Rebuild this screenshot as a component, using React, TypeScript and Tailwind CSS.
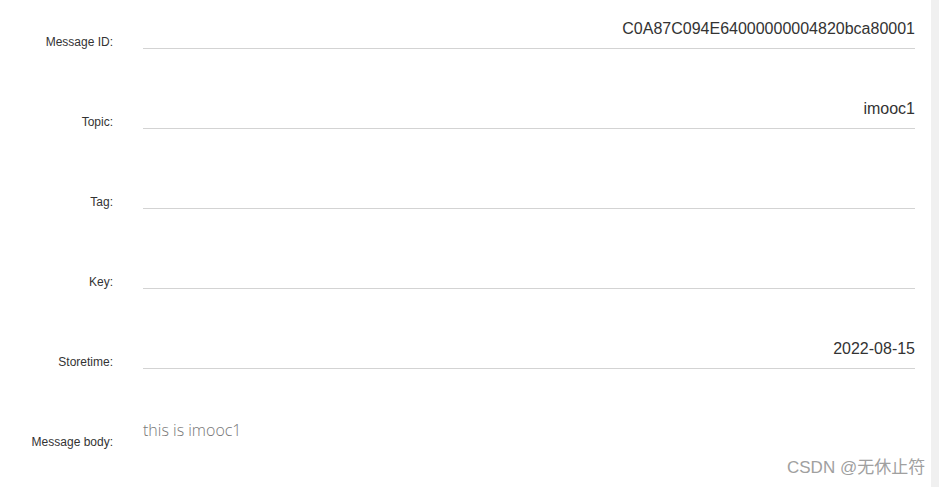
const rows: { label: string; value: string }[] = [
  { label: 'Message ID:', value: 'C0A87C094E64000000004820bca80001' },
  { label: 'Topic:', value: 'imooc1' },
  { label: 'Tag:', value: '' },
  { label: 'Key:', value: '' },
  { label: 'Storetime:', value: '2022-08-15' },
];

function Row({ label, value }: { label: string; value: string }) {
  return (
    <div className="flex h-[80px]">
      <div className="w-[113px] shrink-0 pt-[35px] text-right text-[12px] leading-[14px] text-[#333]">
        {label}
      </div>
      <div className="ml-[30px] h-[49px] w-[772px] border-b border-[#d3d3d3] pt-[20px] text-right text-[16px] leading-[18px] text-[#333]">
        {value}
      </div>
    </div>
  );
}

export default function App() {
  return (
    <div className="relative flex h-[487px] w-[939px] overflow-hidden bg-white font-['Liberation_Sans',Arial,sans-serif]">
      <div className="w-[931px]">
        {rows.map((r) => (
          <Row key={r.label} label={r.label} value={r.value} />
        ))}
        <div className="flex h-[80px]">
          <div className="w-[113px] shrink-0 pt-[35px] text-right text-[12px] leading-[14px] text-[#333]">
            Message body:
          </div>
          <div className="ml-[30px] pt-[20px] font-['Open_Sans',sans-serif] text-[16px] font-light leading-[20px] text-[#777]">
            this is imooc1
          </div>
        </div>
      </div>
      <div className="w-[8px] bg-[#f0f0f0]" />
      <div className="absolute left-[787px] top-[458px] font-['Liberation_Sans','Noto_Sans_CJK_SC',sans-serif] text-[17px] leading-[20px] text-[#a0a0a0]">
        CSDN @无休止符
      </div>
    </div>
  );
}
